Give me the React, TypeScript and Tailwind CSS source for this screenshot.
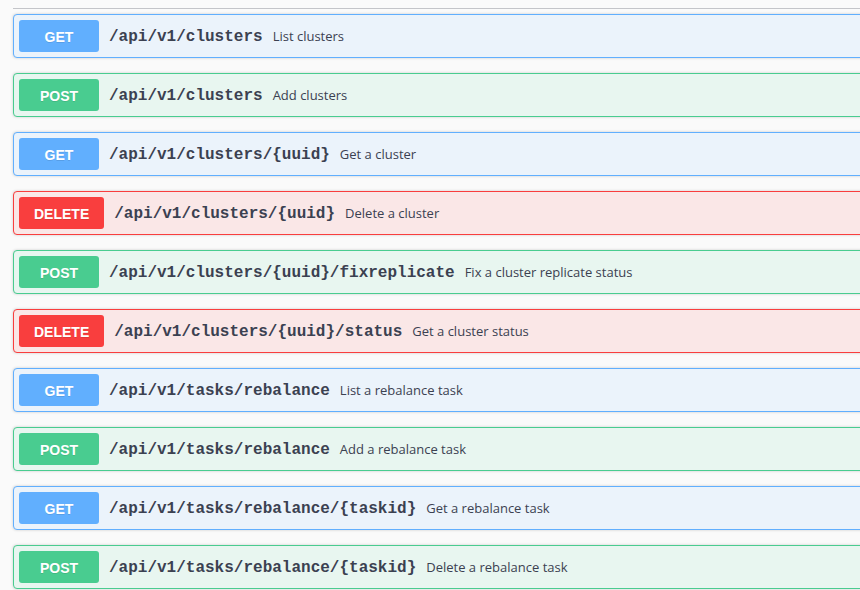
import React from "react";

type Method = "GET" | "POST" | "DELETE";

const endpoints: { method: Method; path: string; desc: string }[] = [
  { method: "GET", path: "/api/v1/clusters", desc: "List clusters" },
  { method: "POST", path: "/api/v1/clusters", desc: "Add clusters" },
  { method: "GET", path: "/api/v1/clusters/{uuid}", desc: "Get a cluster" },
  { method: "DELETE", path: "/api/v1/clusters/{uuid}", desc: "Delete a cluster" },
  { method: "POST", path: "/api/v1/clusters/{uuid}/fixreplicate", desc: "Fix a cluster replicate status" },
  { method: "DELETE", path: "/api/v1/clusters/{uuid}/status", desc: "Get a cluster status" },
  { method: "GET", path: "/api/v1/tasks/rebalance", desc: "List a rebalance task" },
  { method: "POST", path: "/api/v1/tasks/rebalance", desc: "Add a rebalance task" },
  { method: "GET", path: "/api/v1/tasks/rebalance/{taskid}", desc: "Get a rebalance task" },
  { method: "POST", path: "/api/v1/tasks/rebalance/{taskid}", desc: "Delete a rebalance task" },
];

const blockStyles: Record<Method, string> = {
  GET: "border-[#61affe] bg-[#ebf3fb]",
  POST: "border-[#49cc90] bg-[#e8f6f0]",
  DELETE: "border-[#f93e3e] bg-[#fae7e7]",
};

const badgeStyles: Record<Method, string> = {
  GET: "bg-[#61affe]",
  POST: "bg-[#49cc90]",
  DELETE: "bg-[#f93e3e]",
};

const Operation = ({ method, path, desc }: { method: Method; path: string; desc: string }) => (
  <div
    className={`flex items-center w-[900px] h-[44px] px-[5px] border rounded-[4px] shadow-[0_0_3px_rgba(0,0,0,0.19)] ${blockStyles[method]}`}
  >
    {/* Method badge */}
    <span
      className={`flex items-center justify-center min-w-[80px] h-[32px] px-[15px] pt-[2px] rounded-[3px] text-white text-[14px] font-bold [text-shadow:0_1px_0_rgba(0,0,0,0.1)] ${badgeStyles[method]}`}
      style={{ fontFamily: '"Liberation Sans", Arial, sans-serif' }}
    >
      {method}
    </span>
    {/* Path */}
    <span
      className="px-[10px] pt-[2px] text-[16px] font-bold text-[#3b4151] whitespace-nowrap"
      style={{ fontFamily: '"Liberation Mono", "Courier New", monospace' }}
    >
      {path}
    </span>
    {/* Description */}
    <span
      className="pt-[2px] text-[13px] text-[#3b4151] whitespace-nowrap"
      style={{ fontFamily: '"Open Sans", "Liberation Sans", sans-serif' }}
    >
      {desc}
    </span>
  </div>
);

export default function App() {
  return (
    <div className="w-full h-[590px] overflow-hidden bg-[#fafafa] pt-[8px] pl-[13px]">
      <div className="h-px w-[900px] bg-[#c4c5c9]" />
      <div className="mt-[5px] flex flex-col gap-[15px]">
        {endpoints.map((e, i) => (
          <Operation key={i} {...e} />
        ))}
      </div>
    </div>
  );
}
